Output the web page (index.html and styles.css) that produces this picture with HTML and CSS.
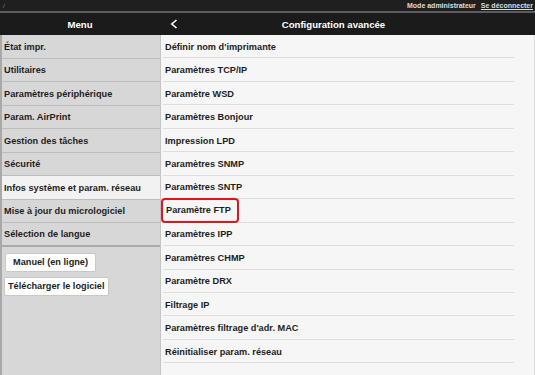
FILE: index.html
```html
<!DOCTYPE html>
<html lang="fr">
<head>
<meta charset="utf-8">
<title>Configuration avancée</title>
<link rel="stylesheet" href="styles.css">
</head>
<body>
<div class="topbar">
  <span class="slash">/</span>
  <span class="admin">Mode administrateur</span>
  <a class="logout" href="#">Se déconnecter</a>
</div>
<div class="header">
  <div class="menu-title">Menu</div>
  <div class="nav">
    <svg class="back" width="8" height="10" viewBox="0 0 8 10"><polyline points="6.5,1 1.8,5 6.5,9" fill="none" stroke="#fff" stroke-width="1.6"/></svg>
    <div class="nav-title">Configuration avancée</div>
  </div>
</div>
<div class="main">
  <div class="sidebar">
    <ul class="side-list">
      <li class="side-item">État impr.</li>
      <li class="side-item">Utilitaires</li>
      <li class="side-item">Paramètres périphérique</li>
      <li class="side-item">Param. AirPrint</li>
      <li class="side-item">Gestion des tâches</li>
      <li class="side-item">Sécurité</li>
      <li class="side-item active">Infos système et param. réseau</li>
      <li class="side-item">Mise à jour du micrologiciel</li>
      <li class="side-item last">Sélection de langue</li>
    </ul>
    <div class="buttons">
      <button class="btn btn-manual">Manuel (en ligne)</button>
      <button class="btn">Télécharger le logiciel</button>
    </div>
  </div>
  <div class="content">
    <ul class="list">
      <li class="row">Définir nom d'imprimante</li>
      <li class="row">Paramètres TCP/IP</li>
      <li class="row">Paramètre WSD</li>
      <li class="row">Paramètres Bonjour</li>
      <li class="row">Impression LPD</li>
      <li class="row">Paramètres SNMP</li>
      <li class="row">Paramètres SNTP</li>
      <li class="row"><span class="hl">Paramètre FTP</span></li>
      <li class="row">Paramètres IPP</li>
      <li class="row">Paramètres CHMP</li>
      <li class="row">Paramètre DRX</li>
      <li class="row">Filtrage IP</li>
      <li class="row">Paramètres filtrage d'adr. MAC</li>
      <li class="row">Réinitialiser param. réseau</li>
    </ul>
  </div>
</div>
</body>
</html>
```
FILE: styles.css
```css
* { box-sizing: border-box; }
html, body {
  margin: 0;
  padding: 0;
  width: 535px;
  height: 375px;
  overflow: hidden;
  font-family: "Liberation Sans", Arial, sans-serif;
  background: #f6f6f6;
}
.topbar {
  height: 13px;
  background: #1f1f1f;
  border-bottom: 2px solid #5c5c5c;
  display: flex;
  align-items: center;
  padding: 0 2px 0 3px;
  font-size: 7px;
  color: #e8e8e8;
}
.slash { color: #888; font-size: 6px; }
.admin { margin-left: auto; font-weight: bold; color: #ddd; }
.logout {
  margin-left: 5px;
  color: #ddd;
  font-weight: bold;
  text-decoration: underline;
}
.header {
  height: 22px;
  background: #1b1b1b;
  display: flex;
  color: #fff;
  font-weight: bold;
  font-size: 9.6px;
}
.menu-title {
  width: 160px;
  display: flex;
  align-items: center;
  justify-content: center;
}
.nav {
  flex: 1;
  display: flex;
  align-items: center;
  padding-left: 10px;
}
.back { display: block; }
.nav-title {
  flex: 1;
  text-align: center;
  padding-right: 46px;
}
.main {
  display: flex;
  height: 340px;
}
.sidebar {
  width: 161px;
  background: #d7d7d7;
  border-left: 2px solid #a9a9a9;
  border-right: 1px solid #c4c4c4;
}
.side-list, .list {
  list-style: none;
  margin: 0;
  padding: 0;
}
.side-item {
  height: 23.5px;
  display: flex;
  align-items: center;
  padding: 1px 0 0 2px;
  border-bottom: 1px solid #bdbdbd;
  font-size: 9.2px;
  font-weight: bold;
  color: #1e1e1e;
}
.side-item.active { background: #f2f2f2; }
.side-item.last { border-bottom: 2px solid #aaaaaa; }
.buttons {
  padding: 6px 0 0 2px;
  display: flex;
  flex-direction: column;
  align-items: flex-start;
  gap: 5px;
}
.btn {
  font-family: "Liberation Sans", Arial, sans-serif;
  font-size: 9.2px;
  font-weight: bold;
  color: #1e1e1e;
  background: #fff;
  border: 1px solid #c8c8c8;
  border-radius: 2px;
  height: 19px;
  padding: 0 3px;
}
.btn-manual { margin-left: 1px; padding: 0 7px; }
.content {
  flex: 1;
  background: #f6f6f6;
  border-right: 1px solid #dcdcdc;
  padding-right: 20px;
}
.row {
  height: 23.46px;
  display: flex;
  align-items: center;
  margin-left: 2px;
  padding: 1px 0 0 2px;
  border-bottom: 1px solid #dedede;
  font-size: 9.2px;
  font-weight: bold;
  color: #1e1e1e;
}
.hl {
  margin-left: -4px;
  padding: 5px 6px 6px 3px;
  border: 2px solid #e3141b;
  border-radius: 4px;
}
```
